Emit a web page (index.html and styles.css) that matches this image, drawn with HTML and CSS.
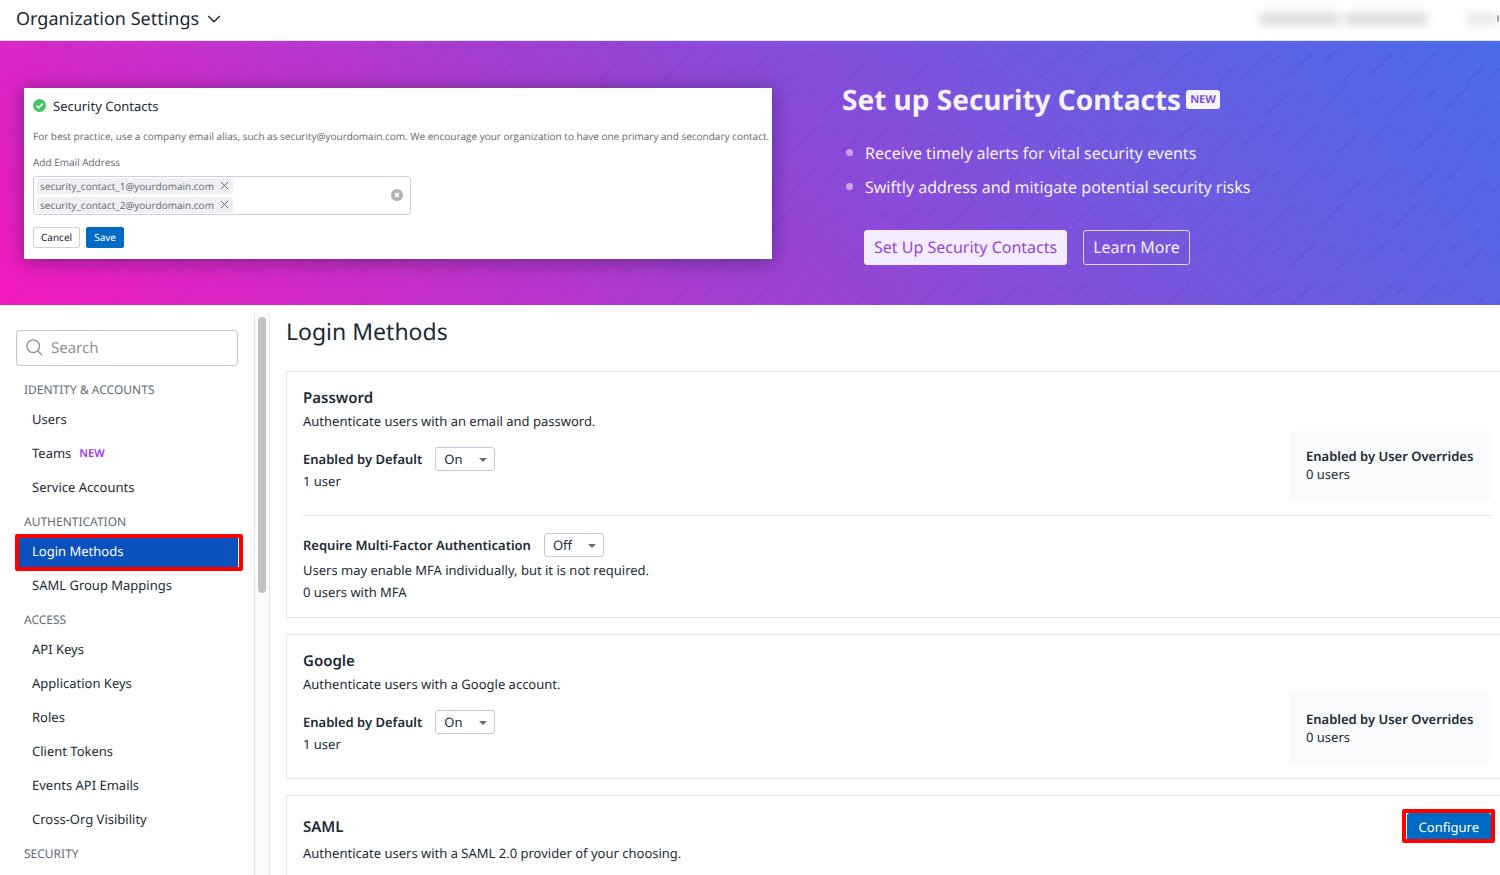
FILE: index.html
```html
<!DOCTYPE html>
<html lang="en">
<head>
<meta charset="utf-8">
<title>Organization Settings</title>
<link rel="stylesheet" href="styles.css">
</head>
<body>
<header class="topbar">
  <button class="topbar-title" type="button">Organization Settings
    <svg width="14" height="14" viewBox="0 0 14 14" fill="none" stroke="currentColor" stroke-width="1.5"><path d="M1.2 4 7 9.8 12.8 4"/></svg>
  </button>
  <div class="account" aria-hidden="true">
    <span class="smudge smudge-org"></span><span class="smudge smudge-name"></span><span class="smudge smudge-link"></span><span class="account-edge"></span>
  </div>
</header>

<section class="banner">
  <svg class="banner-pattern" aria-hidden="true">
    <defs>
      <pattern id="dashes" width="124" height="116" patternUnits="userSpaceOnUse">
        <g stroke="#4a35b8" stroke-width="2" stroke-linecap="round">
          <path d="M6 34 28 12M34 20 40 14M46 38 74 10M84 22 96 10M104 40 120 24M12 62 18 56M26 74 52 48M62 58 70 50M80 70 106 44M112 76 118 70M4 104 24 84M34 96 40 90M50 110 76 84M86 94 92 88M98 112 118 92M30 42h.1M78 36h.1M58 72h.1M110 56h.1M44 80h.1M82 108h.1M8 78h.1"/>
        </g>
      </pattern>
      <linearGradient id="fade"><stop offset="0" stop-color="#fff" stop-opacity=".2"/><stop offset=".6" stop-color="#fff" stop-opacity=".8"/><stop offset="1" stop-color="#fff"/></linearGradient>
      <mask id="fade-mask"><rect width="100%" height="100%" fill="url(#fade)"/></mask>
    </defs>
    <rect width="100%" height="100%" fill="url(#dashes)" mask="url(#fade-mask)"/>
  </svg>
  <div class="contact-card">
    <h3 class="card-title">
      <svg width="13" height="13" viewBox="0 0 13 13"><circle cx="6.5" cy="6.5" r="6.5" fill="#41c464"/><path d="M3.4 6.6 5.7 8.8 9.7 4.6" fill="none" stroke="#fff" stroke-width="1.8"/></svg>
      Security Contacts
    </h3>
    <p class="card-text">For best practice, use a company email alias, such as security@yourdomain.com. We encourage your organization to have one primary and secondary contact.</p>
    <label class="card-label" for="email">Add Email Address</label>
    <div class="email-box">
      <div class="tags">
        <span class="tag">security_contact_1@yourdomain.com <button class="icon-btn" type="button" aria-label="Remove"><svg width="9" height="9" viewBox="0 0 9 9" stroke="currentColor"><path d="M.8.8 8.2 8.2M8.2.8.8 8.2"/></svg></button></span>
        <span class="tag">security_contact_2@yourdomain.com <button class="icon-btn" type="button" aria-label="Remove"><svg width="9" height="9" viewBox="0 0 9 9" stroke="currentColor"><path d="M.8.8 8.2 8.2M8.2.8.8 8.2"/></svg></button></span>
      </div>
      <input class="email-input" id="email" type="email">
      <button class="icon-btn" type="button" aria-label="Clear all"><svg width="12" height="12" viewBox="0 0 12 12"><circle cx="6" cy="6" r="6" fill="#adb2b4"/><path d="M3.9 3.9 8.1 8.1M8.1 3.9 3.9 8.1" stroke="#fff" stroke-width="1.6"/></svg></button>
    </div>
    <div class="card-actions">
      <button class="small-btn" type="button">Cancel</button>
      <button class="small-btn small-btn-primary" type="button">Save</button>
    </div>
  </div>
  <div class="promo">
    <h2 class="promo-title">Set up Security Contacts <span class="promo-badge">NEW</span></h2>
    <ul class="promo-list">
      <li>Receive timely alerts for vital security events</li>
      <li>Swiftly address and mitigate potential security risks</li>
    </ul>
    <div class="promo-actions">
      <button class="promo-btn promo-btn-solid" type="button">Set Up Security Contacts</button>
      <button class="promo-btn" type="button">Learn More</button>
    </div>
  </div>
</section>

<div class="page">
  <nav class="sidebar">
    <div class="search">
      <svg width="17" height="17" viewBox="0 0 17 17" fill="none" stroke="#8b9499" stroke-width="1.4"><circle cx="7.2" cy="7.2" r="6.3"/><path d="M11.7 11.7 16.2 16.2"/></svg>
      <input class="search-input" type="search" placeholder="Search" aria-label="Search">
    </div>
    <h4 class="nav-heading">IDENTITY &amp; ACCOUNTS</h4>
    <ul class="nav-list">
      <li><a href="#">Users</a></li>
      <li><a href="#">Teams <span class="nav-new">NEW</span></a></li>
      <li><a href="#">Service Accounts</a></li>
    </ul>
    <h4 class="nav-heading">AUTHENTICATION</h4>
    <ul class="nav-list">
      <li class="marked"><a class="active" href="#">Login Methods</a></li>
      <li><a href="#">SAML Group Mappings</a></li>
    </ul>
    <h4 class="nav-heading">ACCESS</h4>
    <ul class="nav-list">
      <li><a href="#">API Keys</a></li>
      <li><a href="#">Application Keys</a></li>
      <li><a href="#">Roles</a></li>
      <li><a href="#">Client Tokens</a></li>
      <li><a href="#">Events API Emails</a></li>
      <li><a href="#">Cross-Org Visibility</a></li>
    </ul>
    <h4 class="nav-heading">SECURITY</h4>
  </nav>
  <div class="scroll-track"><div class="scroll-thumb"></div></div>

  <main class="content">
    <h1 class="content-title">Login Methods</h1>

    <section class="panel">
      <div class="method">
        <div class="method-info">
          <h2 class="panel-title">Password</h2>
          <p class="line">Authenticate users with an email and password.</p>
          <div class="setting setting-spaced">
            <label for="pw">Enabled by Default</label>
            <span class="select"><select id="pw"><option>On</option><option>Off</option></select></span>
          </div>
          <p class="count">1 user</p>
        </div>
        <div class="overrides"><strong>Enabled by User Overrides</strong><span>0 users</span></div>
      </div>
      <div class="mfa">
        <div class="setting">
          <label for="mfa">Require Multi-Factor Authentication</label>
          <span class="select"><select id="mfa"><option>Off</option><option>On</option></select></span>
        </div>
        <p class="line line-first">Users may enable MFA individually, but it is not required.</p>
        <p class="line">0 users with MFA</p>
      </div>
    </section>

    <section class="panel">
      <div class="method">
        <div class="method-info">
          <h2 class="panel-title">Google</h2>
          <p class="line">Authenticate users with a Google account.</p>
          <div class="setting setting-spaced">
            <label for="gg">Enabled by Default</label>
            <span class="select"><select id="gg"><option>On</option><option>Off</option></select></span>
          </div>
          <p class="count">1 user</p>
        </div>
        <div class="overrides"><strong>Enabled by User Overrides</strong><span>0 users</span></div>
      </div>
    </section>

    <section class="panel">
      <div class="saml-head">
        <h2 class="panel-title">SAML</h2>
        <div class="configure-wrap marked"><button class="configure" type="button">Configure</button></div>
      </div>
      <p class="line">Authenticate users with a SAML 2.0 provider of your choosing.</p>
    </section>
  </main>
</div>
</body>
</html>
```
FILE: styles.css
```css
* { box-sizing: border-box; }

body {
  margin: 0;
  height: 100vh;
  overflow: hidden;
  display: flex;
  flex-direction: column;
  background: #fff;
  color: #1c2b34;
  font: 13px/22px "Noto Sans", sans-serif;
  text-rendering: geometricPrecision;
}

h1, h2, h3, h4, p, ul { margin: 0; padding: 0; font-weight: 400; }
ul { list-style: none; }
button, input, select { font-family: inherit; color: inherit; margin: 0; text-rendering: inherit; }
svg { flex: none; display: block; }

/* Top bar */
.topbar {
  flex: none;
  display: flex;
  justify-content: space-between;
  align-items: center;
  height: 41px;
  padding: 0 0 3px 16px;
  border-bottom: 1px solid #dfe3ea;
}
.topbar-title {
  display: flex;
  align-items: center;
  gap: 8px;
  padding: 0;
  border: 0;
  background: none;
  font-size: 18px;
  line-height: 24px;
}
.account { display: flex; align-items: center; }
.smudge { height: 12px; background: #d9dcdd; filter: blur(5px); }
.smudge-org { width: 80px; }
.smudge-name { width: 84px; margin-left: 5px; }
.smudge-link { width: 31px; margin-left: 38px; background: #e6e8e9; }
.account-edge { width: 2px; height: 7px; margin-right: 1px; border-radius: 0 2px 2px 0; background: #7d868b; }

/* Banner */
.banner {
  position: relative;
  flex: none;
  display: flex;
  align-items: center;
  gap: 70px;
  height: 264px;
  padding: 0 24px;
  background: linear-gradient(45deg, #f41abf 0%, #c630cb 25%, #9545d6 50%, #6c5ce0 75%, #4a6cec 100%);
}
.banner-pattern { position: absolute; inset: 0; width: 100%; height: 100%; opacity: .14; }
.contact-card {
  position: relative;
  flex: 0 1 748px;
  min-width: 0;
  padding: 8px 8px 11px 9px;
  background: #fff;
  box-shadow: 0 2px 18px rgba(30, 20, 60, .5);
}
.card-title { display: flex; align-items: center; gap: 7px; font-size: 13px; line-height: 20px; }
.card-text,
.card-label,
.tag { font-family: "Open Sans", "Noto Sans", sans-serif; font-size: 10px; line-height: 16px; color: #5f696e; }
.card-text { margin-top: 12px; white-space: nowrap; }
.card-label { display: block; margin-top: 10px; }
.email-box {
  display: flex;
  align-items: center;
  width: 378px;
  height: 39px;
  margin-top: 6px;
  padding: 0 7px 0 3px;
  border: 1px solid #cbcfe0;
  border-radius: 3px;
}
.tags { display: flex; flex-direction: column; gap: 3px; }
.tag {
  display: flex;
  align-items: center;
  gap: 6px;
  padding: 0 4px 0 3px;
  border-radius: 3px;
  background: #f0f0f4;
}
.icon-btn { padding: 0; border: 0; background: none; }
.email-input { flex: 1; min-width: 0; border: 0; outline: 0; background: none; }
.card-actions { display: flex; gap: 6px; margin-top: 12px; }
.small-btn {
  height: 21px;
  padding: 0 7px;
  border: 1px solid #cbcfe0;
  border-radius: 2px;
  background: #fff;
  font-size: 10px;
  line-height: 16px;
}
.small-btn-primary { border-color: #006bc2; background: #006bc2; color: #fff; }

.promo { position: relative; flex: 1; color: #f7f1fd; }
.promo-title { display: flex; gap: 5px; font-size: 28px; font-weight: 700; line-height: 36px; }
.promo-badge {
  align-self: flex-start;
  margin-top: 8px;
  padding: 0 4px;
  border-radius: 3px;
  background: #f8f5fe;
  color: #7257dc;
  font-size: 11px;
  line-height: 19px;
}
.promo-list { margin-top: 18px; }
.promo-list li { display: flex; align-items: center; gap: 12px; padding-left: 4px; font-size: 16px; line-height: 34px; }
.promo-list li::before { content: ""; width: 7px; height: 7px; border-radius: 50%; background: #c9a5ec; }
.promo-actions { display: flex; gap: 16px; margin: 26px 0 0 22px; }
.promo-btn {
  height: 35px;
  padding: 0 9px;
  border: 1px solid #e4d8f8;
  border-radius: 3px;
  background: none;
  font-size: 16px;
  line-height: 24px;
}
.promo-btn-solid { background: #f3ecfc; border-color: #f3ecfc; color: #9249d6; }

/* Page */
.page { flex: 1; min-height: 0; display: flex; overflow: hidden; }

.sidebar { flex: none; width: 254px; padding: 25px 16px 0; }
.search {
  display: flex;
  align-items: center;
  gap: 8px;
  height: 36px;
  margin-bottom: 6px;
  padding: 0 9px 1px;
  border: 1px solid #bfc5dc;
  border-radius: 4px;
}
.search-input { flex: 1; min-width: 0; padding: 0; border: 0; outline: 0; background: none; font-size: 15px; line-height: 22px; }
.search-input::placeholder { color: #8b9499; opacity: 1; }
.nav-heading { height: 30px; padding: 8px 8px 0; font-size: 12px; line-height: 20px; color: #5f6b72; }
.nav-list a {
  display: flex;
  align-items: center;
  gap: 8px;
  height: 34px;
  padding: 0 16px;
  border-radius: 3px;
  color: inherit;
  text-decoration: none;
}
.nav-list .active { background: #0a51bd; color: #fff; }
.nav-new { padding-top: 1px; color: #a033f5; font-size: 11px; font-weight: 600; }

/* Red callout frame around a highlighted control */
.marked { position: relative; }
.marked::after {
  content: "";
  position: absolute;
  inset: 0 -5px -3px -1px;
  border: 4px solid #fe0000;
  border-radius: 2px;
  pointer-events: none;
}

.scroll-track { flex: none; width: 16px; margin-top: 8px; padding: 4px 3px; border: solid #e5e5ea; border-width: 0 1px; background: #fafafa; }
.scroll-thumb { width: 8px; height: 276px; border-radius: 4px; background: #c1c1c1; }

.content { flex: 1; min-width: 0; padding: 10px 0 0 16px; }
.content-title { margin-bottom: 24px; font-size: 23px; line-height: 32px; }
.panel { margin-bottom: 16px; padding: 14px 9px 16px 16px; border: 1px solid #e3e4ee; border-right: 0; }
.panel-title { font-size: 15px; font-weight: 600; line-height: 24px; }
.line-first { margin-top: 2px; }
.count { line-height: 20px; }
.method { display: flex; justify-content: space-between; align-items: flex-end; }
.method-info { padding-bottom: 8px; }
.setting { display: flex; align-items: center; gap: 13px; }
.setting label { font-weight: 600; }
.setting-spaced { margin-top: 15px; }
.select { position: relative; }
.select select {
  display: block;
  appearance: none;
  height: 24px;
  padding: 0 30px 0 8px;
  border: 1px solid #c3c8e0;
  border-radius: 3px;
  background: #fff;
  font-size: 13px;
}
.select::after {
  content: "";
  position: absolute;
  right: 8px;
  top: 11px;
  border: 4px solid transparent;
  border-top-color: #626d74;
  border-bottom: 0;
  pointer-events: none;
}
.overrides { display: flex; flex-direction: column; min-width: 201px; padding: 16px; background: #f9fafb; line-height: 18px; }
.overrides strong { font-weight: 600; }
.mfa { margin-top: 16px; padding-top: 17px; border-top: 1px solid #e0e1ec; }
.panel:has(.mfa) { padding-bottom: 14px; }
.saml-head { display: flex; justify-content: space-between; align-items: center; margin: 3px 0 1px; }
.configure { display: block; height: 28px; padding: 0 12px; border: 0; border-radius: 3px; background: #006bc2; color: #fff; font-size: 13px; line-height: 20px; }
.configure-wrap::after { inset: -4px -4px -2px -5px; }
```
